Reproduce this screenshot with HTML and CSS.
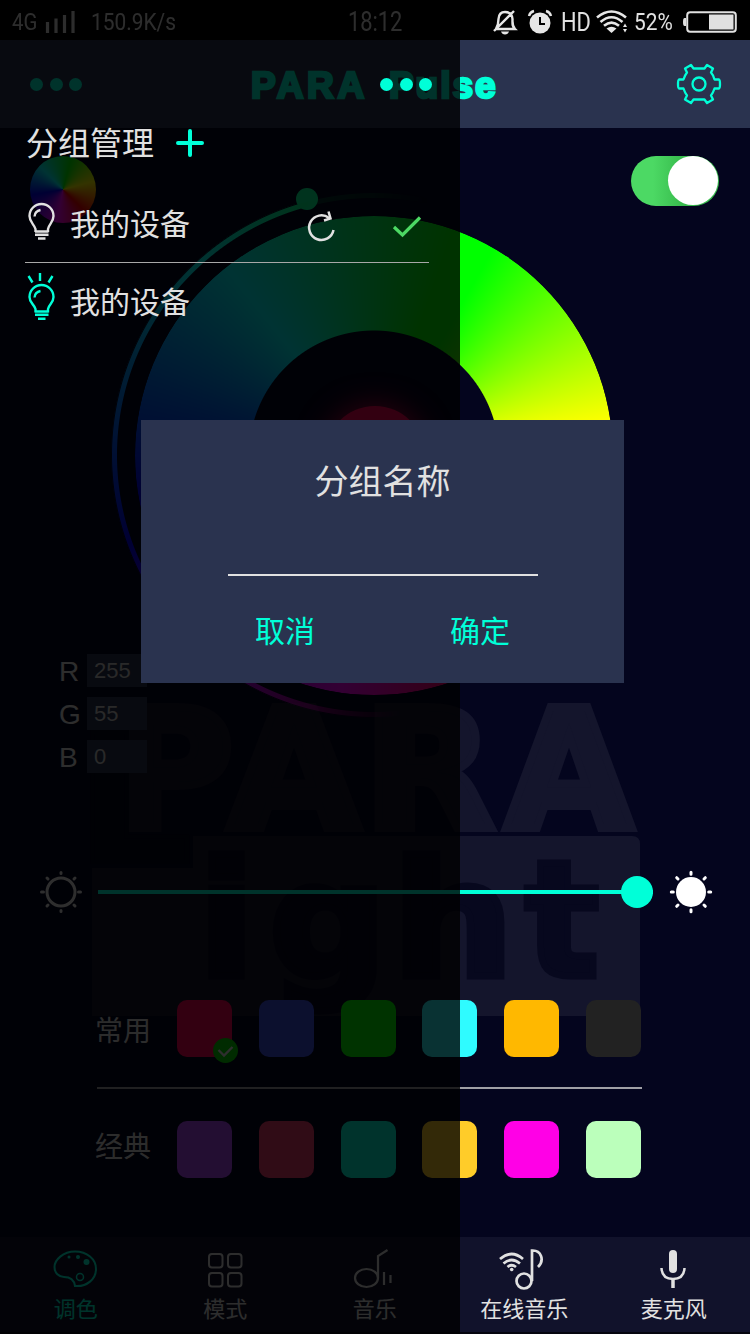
FILE: index.html
```html
<!DOCTYPE html>
<html lang="zh-CN">
<head>
<meta charset="utf-8">
<title>PARA Pulse</title>
<link rel="stylesheet" href="styles.css">
</head>
<body>
<div class="screen">
  <svg class="watermark" width="560" height="330" viewBox="84 695 560 330">
    <g class="wm-light">
      <text class="wm-para" y="828"><tspan x="110" textLength="124" lengthAdjust="spacingAndGlyphs">P</tspan><tspan x="228" textLength="132" lengthAdjust="spacingAndGlyphs">A</tspan><tspan x="363" textLength="132" lengthAdjust="spacingAndGlyphs">R</tspan><tspan x="505" textLength="128" lengthAdjust="spacingAndGlyphs">A</tspan></text>
      <path d="M193 836H632Q640 836 640 844V1016H92V868H193Z"/>
    </g>
    <text class="wm-l" x="76" y="862" textLength="116" lengthAdjust="spacingAndGlyphs">L</text>
    <g class="wm-dark">
      <text x="198" y="976" textLength="57" lengthAdjust="spacingAndGlyphs">i</text>
      <text x="269" y="976" textLength="118" lengthAdjust="spacingAndGlyphs">g</text>
      <text x="392" y="976" textLength="122" lengthAdjust="spacingAndGlyphs">h</text>
      <text x="525" y="976" textLength="74" lengthAdjust="spacingAndGlyphs">t</text>
    </g>
  </svg>

  <header class="status">
    <span class="net">4G</span>
    <svg class="bars" width="29" height="22" viewBox="0 0 29 22"><path d="M1.500 22V11M10 22V7.500M18.500 22V4M27 22V0" stroke="#e1e1e1" stroke-width="3.200"/></svg>
    <span class="speed">150.9K/s</span>
    <span class="clock">18:12</span>
    <svg class="bell" width="24" height="26" viewBox="0 0 24 26" fill="none" stroke="#e6e6e6" stroke-width="2.400"><path d="M3 20H22C19 17 19.500 15 19.500 10Q19 3 12 3Q6 3 5.500 10Q5.500 16 3 20ZM1 22L21 2"/><path d="M8 22.500H16Q15 25.500 12 25.500Q9 25.500 8 22.500Z" fill="#e6e6e6" stroke="none"/></svg>
    <svg class="alarm" width="24" height="24" viewBox="0 0 24 24" fill="none"><circle cx="12" cy="13" r="10.500" fill="#e6e6e6"/><path d="M12 7V14H17" stroke="#000" stroke-width="2"/><path d="M1 6Q2 2 6 1M23 6Q22 2 18 1" stroke="#e6e6e6" stroke-width="2.400"/></svg>
    <span class="hd">HD</span>
    <svg class="wifi" width="32" height="24" viewBox="0 0 32 24" fill="none" stroke="#e6e6e6" stroke-width="2.600"><path d="M1 7.500Q15.500-4.500 30 7.500M4.500 12Q15.500 2.500 26.500 12M8 15.800Q15.500 9.500 23 15.800"/><path d="M10.500 18.500Q15.500 15 20.500 18.500L15.500 23ZM27 17L29 13.500L31 17ZM27 19L29 22.500L31 19Z" fill="#e6e6e6" stroke="none"/></svg>
    <span class="pct">52%</span>
    <svg class="battery" width="54" height="22" viewBox="0 0 54 22"><rect x="4.200" y="1.200" width="48.600" height="19.600" rx="3" fill="none" stroke="#e1e1e1" stroke-width="2"/><rect x="26" y="3.500" width="24.500" height="15" fill="#e1e1e1"/><path d="M3 7H1.500Q0 7 0 11T1.500 15H3Z" fill="#e1e1e1"/></svg>
  </header>

  <header class="topbar">
    <span class="dots"><i></i><i></i><i></i></span>
    <h1 class="title"><span>PARA</span><span class="pulse">Pulse</span></h1>
    <svg class="gear" width="46" height="44" viewBox="-23 -22 46 44" fill="none" stroke="#00ffd8" stroke-width="2.300" stroke-linejoin="round"><circle r="6.500"/><path d="M-5.500-15.500H5.500L8-19L14-15.500L12-11.500Q14-9.500 15.500-4.500L20-4.500Q21-4 21 0T20 4.500L15.500 4.500Q14 9 12 11.500L14 15.500L8 19L5.500 15.500H-5.500L-8 19L-14 15.500L-12 11.500Q-14 9-15.500 4.500L-20 4.500Q-21 4-21 0T-20-4.500L-15.500-4.500Q-14-9-12-11.500L-14-15.500L-8-19Z"/></svg>
  </header>

  <main class="stage">
    <div class="presets"></div>
    <div class="arc"></div>
    <div class="arc-knob"></div>
    <div class="wheel"></div>
    <div class="glow"></div>
    <div class="toggle"><i></i></div>
    <div class="rgb">
      <label>R</label><span>255</span>
      <label>G</label><span>55</span>
      <label>B</label><span>0</span>
    </div>
  </main>

  <section class="brightness">
    <svg width="44" height="44" viewBox="-22 -22 44 44" stroke="#e6e6e6" stroke-width="3" stroke-linecap="round" fill="none"><circle r="14"/><path d="M0-19.500V-18.500M0 19.500V18.500M-19.500 0H-17.500M19.500 0H17.500M-14-14L-13-13M14 14L13 13M-14 14L-13 13M14-14L13-13"/></svg>
    <div class="slider"><i></i></div>
    <svg width="44" height="44" viewBox="-22 -22 44 44" stroke="#fff" stroke-width="3" stroke-linecap="round" fill="none"><circle r="15" fill="#fff" stroke="none"/><path d="M0-19.700V-17.700M0 19.700V17.700M-19.700 0H-17.700M19.700 0H17.700M-14.300-14.300L-13-13M14.300 14.300L13 13M-14.300 14.300L-13 13M14.300-14.300L13-13"/></svg>
  </section>

  <section class="swatches">
    <div class="row">
      <span class="name">常用</span>
      <div class="sw c-rose"><svg class="picked" width="25" height="25" viewBox="0 0 25 25"><circle cx="12.500" cy="12.500" r="12.500" fill="#00d800"/><path d="M5.500 12L11 17.500L19.500 9" fill="none" stroke="#e6e6e6" stroke-width="2.300"/></svg></div>
      <div class="sw c-blue"></div><div class="sw c-green"></div><div class="sw c-cyan"></div><div class="sw c-amber"></div><div class="sw c-dark"></div>
    </div>
    <div class="row">
      <span class="name">经典</span>
      <div class="sw c-purple"></div><div class="sw c-coral"></div><div class="sw c-teal"></div><div class="sw c-yellow"></div><div class="sw c-magenta"></div><div class="sw c-mint"></div>
    </div>
  </section>

  <nav class="tabs">
    <div class="tab active"><svg width="44" height="40" viewBox="0 0 44 40" fill="none" stroke="currentColor" stroke-width="2"><path d="M22 37C21 30 16 28 11 28C6 28 1.500 24 1.500 18C1.500 11 10 2.500 22 2.500C34 2.500 43 10 43 20C43 30 34 38 22 37Z"/><circle cx="27" cy="28" r="3.500" stroke-width="1.500"/><circle cx="33.500" cy="13" r="3" fill="currentColor" stroke="none"/><circle cx="25" cy="8" r="2" fill="currentColor" stroke="none"/><circle cx="16" cy="8" r="1.500" fill="currentColor" stroke="none"/></svg><span>调色</span></div>
    <div class="tab"><svg width="44" height="40" viewBox="0 0 44 40" fill="none" stroke="currentColor" stroke-width="2"><rect x="6" y="5" width="13.500" height="13.500" rx="3"/><rect x="25" y="5" width="13.500" height="13.500" rx="3"/><rect x="6" y="24" width="13.500" height="13.500" rx="3"/><rect x="25" y="24" width="13.500" height="13.500" rx="3"/></svg><span>模式</span></div>
    <div class="tab"><svg width="44" height="40" viewBox="0 0 44 40" fill="none" stroke="currentColor" stroke-width="2.200"><ellipse cx="13.500" cy="29" rx="11.500" ry="9"/><path d="M25 29V7L34.500 1M31 23V36M37.500 26V34"/></svg><span>音乐</span></div>
    <div class="tab"><svg class="online" width="46" height="42" viewBox="0 0 46 42" fill="none" stroke="currentColor" stroke-width="2.700"><circle cx="27" cy="33" r="7.500"/><path d="M35 33V2.500C44 2 48 12 41 19M3 11Q14.500 1 26 11M6.500 15.500Q14.500 8.500 23 15.500M10.500 19Q14.500 15.500 19 19"/><circle cx="14.700" cy="21.500" r="1.800" fill="currentColor" stroke="none"/></svg><span>在线音乐</span></div>
    <div class="tab"><svg width="44" height="40" viewBox="0 0 44 40" fill="none" stroke="currentColor" stroke-width="2.500"><rect x="18" y="1" width="8" height="23" rx="4" fill="currentColor" stroke="none"/><path d="M10.500 19Q11 30 22 30T33.500 19"/><path d="M22 30V39" stroke-width="3.500"/></svg><span>麦克风</span></div>
  </nav>

  <aside class="drawer">
    <span class="dots"><i></i><i></i><i></i></span>
    <div class="group-head"><h2>分组管理</h2><svg width="28" height="28" viewBox="0 0 28 28"><path d="M2 14H26M14 2V26" stroke="#00ffd8" stroke-width="4" stroke-linecap="round"/></svg></div>
    <div class="group">
      <svg class="bulb" width="30" height="48" viewBox="0 0 30 48" fill="none" stroke="#e1e1e1" stroke-width="2.400"><path d="M8.500 36V33C7 28 2.500 26 2.500 20A11.800 11.800 0 0 1 26.500 20C26.500 26 22 28 21 33V36M8 35.500H21.500M8 38.700H21.500M11 42.500H18.500"/><path d="M7.500 20.500Q8 15 13.500 14"/></svg>
      <span>我的设备</span>
      <svg class="redo" width="28" height="32" viewBox="0 0 28 32" fill="none" stroke="#e1e1e1" stroke-width="2.500"><path d="M26.500 19A12.300 12.300 0 1 1 22 7"/><path d="M21.500 .5L23.500 7.500L17 9.500"/></svg>
      <svg class="ok" width="28" height="22" viewBox="0 0 28 22" fill="none" stroke="#4cd964" stroke-width="3.200"><path d="M1 11L9.500 19L27 1.500"/></svg>
    </div>
    <div class="group second">
      <svg class="bulb" width="30" height="48" viewBox="0 0 30 48" fill="none" stroke="#00ffd8" stroke-width="2.400"><path d="M8.500 39.500V36C7 31 2.500 30 2.500 24A11.800 11.800 0 0 1 26.500 24C26.500 30 22 31 21 36V39.500M8 38.500H21.500M8 41.700H21.500M11 45.700H18.500"/><path d="M7.500 24.500Q8 19 13.500 18M1.500 3L5.500 9.500M13 0V8M25.500 3L21.500 9.500"/></svg>
      <span>我的设备</span>
    </div>
  </aside>

  <div class="dialog">
    <h3>分组名称</h3>
    <div class="field"></div>
    <div class="actions"><span>取消</span><span>确定</span></div>
  </div>
</div>
</body>
</html>
```

FILE: styles.css
```css
* { box-sizing: border-box; }
body { margin: 0; background: #000; font-family: "Liberation Sans", "Noto Sans CJK SC", sans-serif; }
h1, h2, h3 { margin: 0; font-weight: normal; }
svg { display: block; flex: none; overflow: visible; }
.screen { position: relative; width: 750px; height: 1334px; overflow: hidden; background: #04051e; display: flex; flex-direction: column; isolation: isolate; }

.watermark { position: absolute; left: 84px; top: 695px; z-index: -1; font-family: "DejaVu Sans", sans-serif; font-weight: bold; }
.wm-light { fill: #14152c; }
.wm-para { font-size: 165px; stroke: #14152c; stroke-width: 8px; }
.wm-l { font-size: 178px; fill: #04051a; stroke: #04051a; stroke-width: 4px; }
.wm-dark { font-size: 160px; fill: #07081e; stroke: #07081e; stroke-width: 7px; }

.status { height: 40px; flex: none; background: #000; color: #e1e1e1; display: flex; align-items: center; padding: 4px 12px 0; font: 24px/36px Roboto, sans-serif; white-space: nowrap; }
.status span { flex: none; transform-origin: left center; }
.net { width: 34px; transform: scaleX(.85); }
.speed { width: 257px; margin-left: 16px; transform: scaleX(.87); }
.clock { width: 145px; font-size: 28px; transform: scaleX(.78); }
.alarm { margin-left: 11px; }
.hd { width: 35px; margin-left: 9px; font-size: 26px; transform: scaleX(.84); }
.pct { width: 49px; margin-left: 6px; transform: scaleX(.87); }

.topbar { height: 88px; flex: none; background: #2a334f; display: flex; align-items: center; padding: 0 28px 0 30px; }
.dots { display: flex; gap: 6.500px; }
.dots i { width: 13px; height: 13px; border-radius: 50%; background: #00ffd8; }
.title { flex: 1; margin: 3px 0 0 169px; display: flex; gap: 21px; font: bold 37px/44px "Liberation Sans", sans-serif; color: #00ffd8; -webkit-text-stroke: 2.600px #00ffd8; letter-spacing: 3.700px; }
.pulse { letter-spacing: 2px; }

.stage { height: 724px; flex: none; display: grid; }
.stage > * { grid-area: 1 / 1; }
.presets { width: 66px; height: 67px; margin: 28px 0 0 30px; border-radius: 50%; background: conic-gradient(from 15deg, #0f0, #ff0 60deg, #f00 120deg, #f0f 175deg, #00f 245deg, #0ff 300deg, #0f0); }
.wheel { width: 478px; height: 479px; margin: 88px 0 0 135px; border-radius: 50%; background: conic-gradient(from 24deg, #0f0 6deg, #ff0 58deg, #f00 118deg, #f0f 164deg, #00f 236deg, #0ff 298deg, #0f0 356deg); mask: radial-gradient(circle, transparent 124.500px, #000 125.500px); }
.arc { width: 526px; height: 526px; margin: 64px 0 0 111px; border-radius: 50%; background: conic-gradient(from 20deg, #0f0, #ff0 62deg, #f00 122deg, #f0f 180deg, #00f 230deg, #0ff 296deg, #0f8 325deg, #0f0); mask: radial-gradient(circle closest-side, transparent 256.500px, #000 257.500px, #000 261.500px, transparent 262.500px), conic-gradient(rgba(0,0,0,.12), transparent 12deg, transparent 174deg, #000 215deg, #000 344deg, rgba(0,0,0,.18) 346deg, rgba(0,0,0,.12)); mask-composite: intersect; }
.arc-knob { width: 22px; height: 22px; margin: 60px 0 0 296px; border-radius: 50%; background: #00ff96; }
.glow { width: 100px; height: 100px; margin: 278px 0 0 325px; border-radius: 50%; background: #ff0055; box-shadow: 0 0 26px 4px rgba(255,0,85,.65); }
.toggle { width: 88px; height: 50px; margin: 28px 0 0 631px; border-radius: 25px; background: linear-gradient(90deg, #4cd964 25%, #37ba4c 60%); display: flex; justify-content: flex-end; padding-right: 1px; }
.toggle i { width: 50px; height: 49px; border-radius: 50%; background: #fff; }
.rgb { margin: 526px 0 0 59px; align-self: start; display: grid; grid-template-columns: 28px 60px; grid-auto-rows: 33px; row-gap: 10px; line-height: 36px; font-size: 28px; color: #e1e1e1; }
.rgb span { background: #2a334f; font-size: 22px; line-height: 34px; padding-left: 7px; color: #ccc; }

.brightness { height: 80px; flex: none; display: flex; align-items: center; padding: 0 37px 0 39px; }
.slider { flex: 1; height: 4px; margin: 0 16px 0 15px; background: #00ffd8; display: flex; align-items: center; justify-content: flex-end; }
.slider i { width: 32px; height: 32px; border-radius: 50%; background: #00ffd8; }

.swatches { height: 305px; flex: none; padding: 68px 108px 0 95px; }
.row { display: grid; grid-template-columns: 80px repeat(5, 81.800px) 55px; height: 89px; border-bottom: 2px solid #a0a0a6; margin-left: 2px; }
.row + .row { border: 0; margin-top: 32px; }
.name { margin-left: -2px; font-size: 28px; line-height: 63px; color: #dadada; }
.row + .row .name { line-height: 54px; }
.sw { position: relative; width: 55px; height: 57px; border-radius: 10px; }
.picked { position: absolute; right: -6px; bottom: -6px; }
.c-rose { background: #ff0055; } .c-blue { background: #3c50e6; } .c-green { background: #0f0; } .c-cyan { background: #2ffbff; } .c-amber { background: #ffb800; } .c-dark { background: #222; }
.c-purple { background: #af46fa; } .c-coral { background: #f03c6e; } .c-teal { background: #00ffdc; } .c-yellow { background: #ffcc29; } .c-magenta { background: #ff00e6; } .c-mint { background: #bbffbb; }

.tabs { height: 97px; flex: none; background: #11122b; border-bottom: 2px solid #05050f; display: grid; grid-template-columns: repeat(5, 149.500px); padding-left: 1px; color: #e1e1e1; }
.tab { display: flex; flex-direction: column; align-items: center; padding-top: 11px; }
.tab svg { height: 42px; }
.tab .online { margin-right: 8px; }
.tab:first-child svg, .tab:last-child svg { margin-right: 2px; }
.tab span { font-size: 22px; line-height: 36px; margin-top: 2px; }
.active { color: #00ffd8; }

.drawer { position: absolute; left: 0; top: 0; width: 460px; height: 1334px; background: rgba(0,0,0,.8); color: #e1e1e1; padding: 78px 25px 0; }
.drawer .dots { margin-left: 355px; }
.group-head { display: flex; align-items: center; gap: 22px; height: 40px; margin: 32px 0 0 1px; }
.group-head h2 { font-size: 32px; line-height: 42px; padding-top: 2px; }
.group { display: flex; align-items: center; width: 404px; height: 78px; margin-top: 22px; padding-left: 2px; border-bottom: 1px solid #a8a8a8; font-size: 30px; }
.group span { margin: 2px 0 0 13px; line-height: 44px; }
.bulb { margin-bottom: 8px; }
.second .bulb { margin-bottom: 10px; }
.redo { margin: 6px 0 0 117px; }
.ok { margin: 6px 0 0 58px; }
.group.second { margin-top: 0; border: 0; }

.dialog { position: absolute; left: 141px; top: 420px; width: 483px; height: 263px; background: #2a334f; color: #e1e1e1; display: flex; flex-direction: column; align-items: center; padding-top: 37px; }
.dialog h3 { font-size: 34px; line-height: 50px; }
.field { width: 310px; height: 69px; border-bottom: 2px solid #e1e1e1; }
.actions { width: 255px; margin-top: 34px; display: flex; justify-content: space-between; font-size: 30px; line-height: 44px; color: #00ffd8; }
```
